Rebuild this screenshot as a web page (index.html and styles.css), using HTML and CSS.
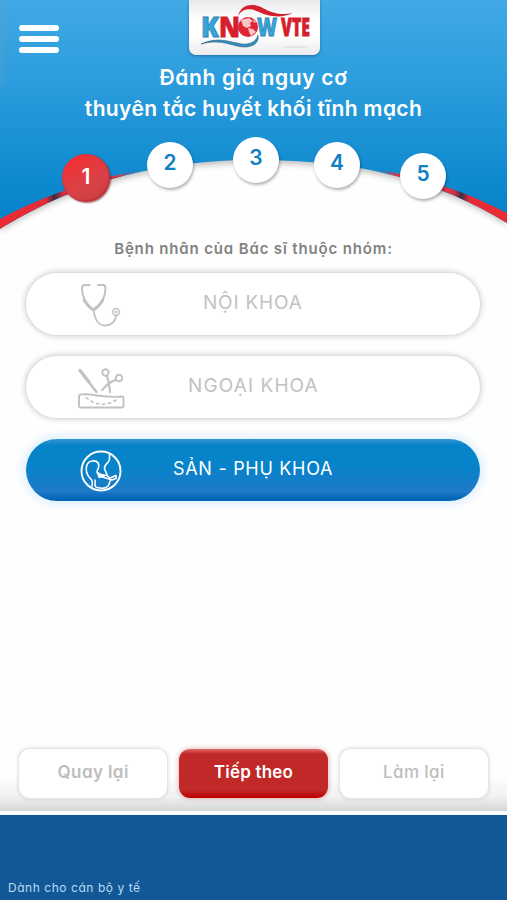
FILE: index.html
```html
<!DOCTYPE html>
<html lang="vi">

<head>
    <meta charset="UTF-8">
    <meta name="viewport" content="width=device-width, initial-scale=1.0">
    <title>Know VTE</title>
    <link rel="stylesheet" href="styles.css">
</head>

<body>
    <header class="header">
        <svg class="header-bg" viewBox="0 0 507 240" aria-hidden="true">
            <defs>
                <linearGradient id="sky" x1="0" y1="0" x2="0" y2="1">
                    <stop offset="0" stop-color="#41a9e5" />
                    <stop offset=".35" stop-color="#2c9ddd" />
                    <stop offset=".75" stop-color="#118bd0" />
                    <stop offset="1" stop-color="#0080c8" />
                </linearGradient>
                <linearGradient id="rim" gradientUnits="userSpaceOnUse" x1="0" y1="0" x2="507" y2="0">
                    <stop offset="0" stop-color="#ec2a35" />
                    <stop offset=".09" stop-color="#e32c38" />
                    <stop offset=".107" stop-color="#3b2c40" />
                    <stop offset=".125" stop-color="#d22f42" />
                    <stop offset=".23" stop-color="#d93346" />
                    <stop offset=".28" stop-color="#2b7fc0" stop-opacity="0" />
                    <stop offset=".74" stop-color="#2b7fc0" stop-opacity="0" />
                    <stop offset=".78" stop-color="#d93346" />
                    <stop offset=".895" stop-color="#d93346" />
                    <stop offset=".91" stop-color="#3b2c40" />
                    <stop offset=".925" stop-color="#e32c38" />
                    <stop offset="1" stop-color="#ec2a35" />
                </linearGradient>
                <linearGradient id="edge" x1="0" y1="0" x2="1" y2="0">
                    <stop offset="0" stop-color="#8e9fae" stop-opacity=".8" />
                    <stop offset="1" stop-color="#2c9ddd" stop-opacity="0" />
                </linearGradient>
                <filter id="soft" x="-10%" y="-20%" width="120%" height="140%">
                    <feGaussianBlur stdDeviation="3" />
                </filter>
            </defs>
            <path d="M0 231C60 194 140 163 255 163C365 163 440 185 507 225V0H0Z" fill="#000" opacity=".25" filter="url(#soft)" />
            <path d="M0 229C60 192 140 160 255 160C365 160 440 182 507 223V0H0Z" fill="url(#sky)" />
            <path d="M0 229C60 192 140 160 255 160C365 160 440 182 507 223V213C440 178 365 160 255 160C140 160 60 187 0 219Z" fill="url(#rim)" />
            <ellipse cx="0" cy="38" rx="13" ry="48" fill="url(#edge)" filter="url(#soft)" />
        </svg>

        <div class="topbar">
            <button class="menu" aria-label="Menu"><span></span><span></span><span></span></button>
            <div class="logo">
                <svg width="131" height="55" viewBox="0 0 131 55">
                    <ellipse cx="106" cy="47" rx="13" ry="1" fill="#e2e2e2" />
                    <g class="logo-text">
                        <text class="blue" x="12" y="37" textLength="18" lengthAdjust="spacingAndGlyphs">K</text>
                        <text class="red" x="30" y="37" textLength="21" lengthAdjust="spacingAndGlyphs">N</text>
                        <text class="blue small" x="68" y="36" textLength="20" lengthAdjust="spacingAndGlyphs">W</text>
                        <text class="red small" x="92" y="36" textLength="29" lengthAdjust="spacingAndGlyphs">VTE</text>
                    </g>
                    <circle cx="59" cy="27" r="10" fill="#e02430" />
                    <path d="M52 20l8-2 4 3-3 2 1 3-4 2-4-2zM59 28l5 1 3 3-5 4-2-4zM64 19l3 3-2 1z" fill="#f9c5c8" />
                    <path d="M49 16C52 4 63 3 72 7C81 12 90 16 104 13C92 19 78 16 70 12C61 8 54 8 49 16Z" fill="#d51f2d" />
                    <path d="M12 44C28 37 37 41 48 43C58 46 67 43 69 35C71 45 60 49 48 46C36 43 28 40 12 44Z" fill="#318fbd" stroke="#35617c" stroke-width=".6" />
                </svg>
            </div>
        </div>

        <h1 class="title"><span class="line-one">Đánh giá nguy cơ</span><br><span class="line-two">thuyên tắc huyết khối tĩnh mạch</span></h1>

        <div class="steps">
            <span class="step active">1</span>
            <span class="step second">2</span>
            <span class="step third">3</span>
            <span class="step fourth">4</span>
            <span class="step fifth">5</span>
        </div>
    </header>

    <main class="content">
        <p class="question">Bệnh nhân của Bác sĩ thuộc nhóm:</p>

        <div class="options">
            <button class="option">
                <svg class="icon" viewBox="0 0 60 60">
                    <path d="M19.500 12H14.500Q12 12 12 15.500C12 26 17 32 23.500 36.500C30 32 35.500 26 35.500 15.500Q35.500 12 33 12H28" stroke-width="2" />
                    <path d="M14 27Q18 34 23.500 37Q29 34 33 27" stroke-width="2.600" />
                    <path d="M23.500 37C25 48 29 52.500 35 52.500C41 52.500 46 48 46 42.500" stroke-width="1.800" />
                    <circle cx="46" cy="39" r="3.400" stroke-width="1.500" />
                    <circle cx="46" cy="39" r="1.100" stroke-width="1" />
                </svg>
                <span class="label internal">NỘI KHOA</span>
            </button>
            <button class="option">
                <svg class="icon" viewBox="0 0 60 60">
                    <path d="M10 14.500L19 26" stroke-width="3.400" />
                    <path d="M18 25L26.500 36" stroke-width="2.400" />
                    <circle cx="35.500" cy="16.500" r="3.200" stroke-width="1.900" />
                    <circle cx="49" cy="22" r="3.200" stroke-width="1.900" />
                    <path d="M37 20L39 27.500L40 36M46 23.500L38.500 27.500L32 34" stroke-width="2.200" />
                    <path d="M9 40.500Q9 39 10.500 38.500C24 37 32 42.500 52 40.500Q53.500 40.500 53.500 42V50Q53.500 51.500 52 51.500H10.500Q9 51.500 9 50Z" stroke-width="1.900" />
                    <path d="M16 41.500Q30 53.500 46 44" stroke-width="1.600" stroke-dasharray="2.500 3.500" />
                </svg>
                <span class="label surgery">NGOẠI KHOA</span>
            </button>
            <button class="option selected">
                <svg class="icon" viewBox="0 0 60 60">
                    <circle cx="31" cy="32" r="19.500" stroke-width="1.900" />
                    <path d="M39.500 15V20C39 25 34 24 34.500 30L37 35.500" stroke-width="1.600" />
                    <path d="M22 47C23 42 22 41 19 38C15 33 15 23 22 22C28 21 30 25 28 30C26 33 27 35 30 35.500L37 36.500L40 39L46 36.500V39.500L42 41L36 39L29 37" stroke-width="1.600" />
                    <path d="M25 41C26 44 23 47 27 48.500C31 49.500 36 49.500 38 47C40 45 39 42 41 41" stroke-width="1.500" />
                    <path d="M28 34L34 37L29 38Z" fill="currentColor" stroke-width="1.800" />
                </svg>
                <span class="label maternity">SẢN - PHỤ KHOA</span>
            </button>
        </div>
    </main>

    <nav class="actions">
        <button class="btn back">Quay lại</button>
        <button class="btn primary">Tiếp theo</button>
        <button class="btn reset">Làm lại</button>
    </nav>

    <footer class="footer">Dành cho cán bộ y tế</footer>
</body>

</html>
```
FILE: styles.css
```css
* {
    box-sizing: border-box;
}

body {
    margin: 0;
    height: 900px;
    display: flex;
    flex-direction: column;
    background: #fefefe;
    font-family: Inter, "Open Sans", sans-serif;
    font-feature-settings: "cv11" 1;
    overflow: hidden;
}

button {
    font: inherit;
    font-feature-settings: inherit;
    border: none;
    cursor: pointer;
}

.header {
    position: relative;
    height: 240px;
    flex: none;
}

.header-bg {
    position: absolute;
    left: 0;
    top: 0;
    width: 507px;
    height: 240px;
    z-index: -1;
}

.topbar {
    display: flex;
    height: 55px;
    padding-left: 19px;
}

.menu {
    display: flex;
    flex-direction: column;
    gap: 5px;
    width: 40px;
    height: 28px;
    margin: 25px 130px 0 0;
    padding: 0;
    background: none;
}

.menu span {
    height: 6px;
    border-radius: 3px;
    background: #fff;
}

.logo {
    width: 131px;
    height: 55px;
    border-radius: 0 0 7px 7px;
    background: linear-gradient(#e9e9ec, #fff 35%, #fff 65%, #ececef);
    box-shadow: 0 1px 3px rgba(0, 60, 110, 0.5);
}

.logo-text {
    font-family: "Open Sans", sans-serif;
    font-size: 29px;
    font-weight: 800;
}

.logo-text .small {
    font-size: 25px;
}

.logo-text .blue {
    fill: #36a5dc;
    stroke: #2f7fae;
    stroke-width: 0.8px;
}

.logo-text .red {
    fill: #d51f2d;
    stroke: #d51f2d;
    stroke-width: 0.8px;
}

.title {
    margin: 7px 0 0;
    color: #fff;
    font-size: 21px;
    font-weight: 600;
    line-height: 31px;
    text-align: center;
    white-space: nowrap;
}

.line-one {
    letter-spacing: 0.65px;
}

.line-two {
    letter-spacing: 0.36px;
}

.steps {
    display: flex;
    align-items: flex-start;
    margin-top: 13px;
    padding-left: 62px;
}

.step {
    width: 46px;
    height: 46px;
    border-radius: 50%;
    background: #fff;
    color: #127fc4;
    box-shadow: 1px 2px 3px rgba(0, 0, 0, 0.3);
    font-size: 21px;
    font-weight: 600;
    line-height: 42px;
    text-align: center;
}

.step.active {
    width: 48px;
    height: 48px;
    margin-top: 17px;
    background: linear-gradient(150deg, #ef3237 20%, #d94247 60%, #c83c40);
    color: #fff;
    box-shadow: 1px 1px 2px rgba(90, 0, 10, 0.6), inset -1px -1px 2px #b62d32;
    line-height: 45px;
}

.step.second {
    margin: 5px 0 0 37px;
}

.step.third {
    margin-left: 40px;
}

.step.fourth {
    margin: 5px 0 0 35px;
}

.step.fifth {
    margin: 16px 0 0 40px;
}

.content {
    flex: 1;
}

.question {
    margin: 0;
    color: #828282;
    font-size: 15px;
    font-weight: 600;
    line-height: 18px;
    letter-spacing: 0.85px;
    text-align: center;
    white-space: nowrap;
}

.options {
    display: flex;
    flex-direction: column;
    gap: 21px;
    padding: 15px 27px 0 26px;
}

.option {
    display: flex;
    width: 454px;
    height: 62px;
    padding: 0 0 0 44px;
    border-radius: 31px;
    background: #fff;
    color: #c2c2c2;
    box-shadow: 0 0 0 1px #dedede, 0 0 5px 2px rgba(0, 0, 0, 0.15);
    text-align: left;
}

.option.selected {
    background: linear-gradient(#3298cf, #0783c9 10%, #0783c9 45%, #1e79c8 85%, #0065b6 97%);
    color: #fff;
    box-shadow: 0 0 10px 3px #d9edfb;
}

.icon {
    width: 60px;
    height: 60px;
    flex: none;
    fill: none;
    stroke: currentColor;
    stroke-linecap: round;
    stroke-linejoin: round;
}

.label {
    font-size: 19px;
    font-weight: 400;
    line-height: 60px;
    letter-spacing: 0.8px;
    white-space: nowrap;
}

.internal {
    margin-left: 73px;
}

.surgery {
    margin-left: 58px;
    letter-spacing: 1.1px;
}

.maternity {
    margin-left: 43px;
    font-size: 18px;
    letter-spacing: 0.7px;
}

.actions {
    display: flex;
    gap: 12px;
    height: 63px;
    padding: 0 19px;
    background: linear-gradient(#fefefe 45%, #f1f1f1 78%, #d5d5d5);
}

.btn {
    width: 149px;
    height: 49px;
    margin-top: 1px;
    padding: 0 0 3px;
    border-radius: 11px;
    background: #fff;
    color: #bdbdbd;
    box-shadow: 0 0 0 1px #e5e5e5, 0 0 4px 1px rgba(0, 0, 0, 0.12);
    font-size: 17px;
    font-weight: 500;
    letter-spacing: 0.4px;
}

.btn.back {
    font-weight: 600;
}

.btn.primary {
    background: linear-gradient(#e36a69, #c12828 10%, #c12828 84%, #bc0000);
    color: #fff;
    box-shadow: 0 0 4px 1px rgba(180, 0, 0, 0.25);
    font-weight: 600;
    letter-spacing: 0.2px;
}

.footer {
    height: 89px;
    flex: none;
    padding: 65px 0 0 8px;
    border-top: 4px solid #fafdff;
    background: #125896;
    color: #b8dcf5;
    font-size: 12px;
    line-height: 15px;
    letter-spacing: 0.55px;
}
```
